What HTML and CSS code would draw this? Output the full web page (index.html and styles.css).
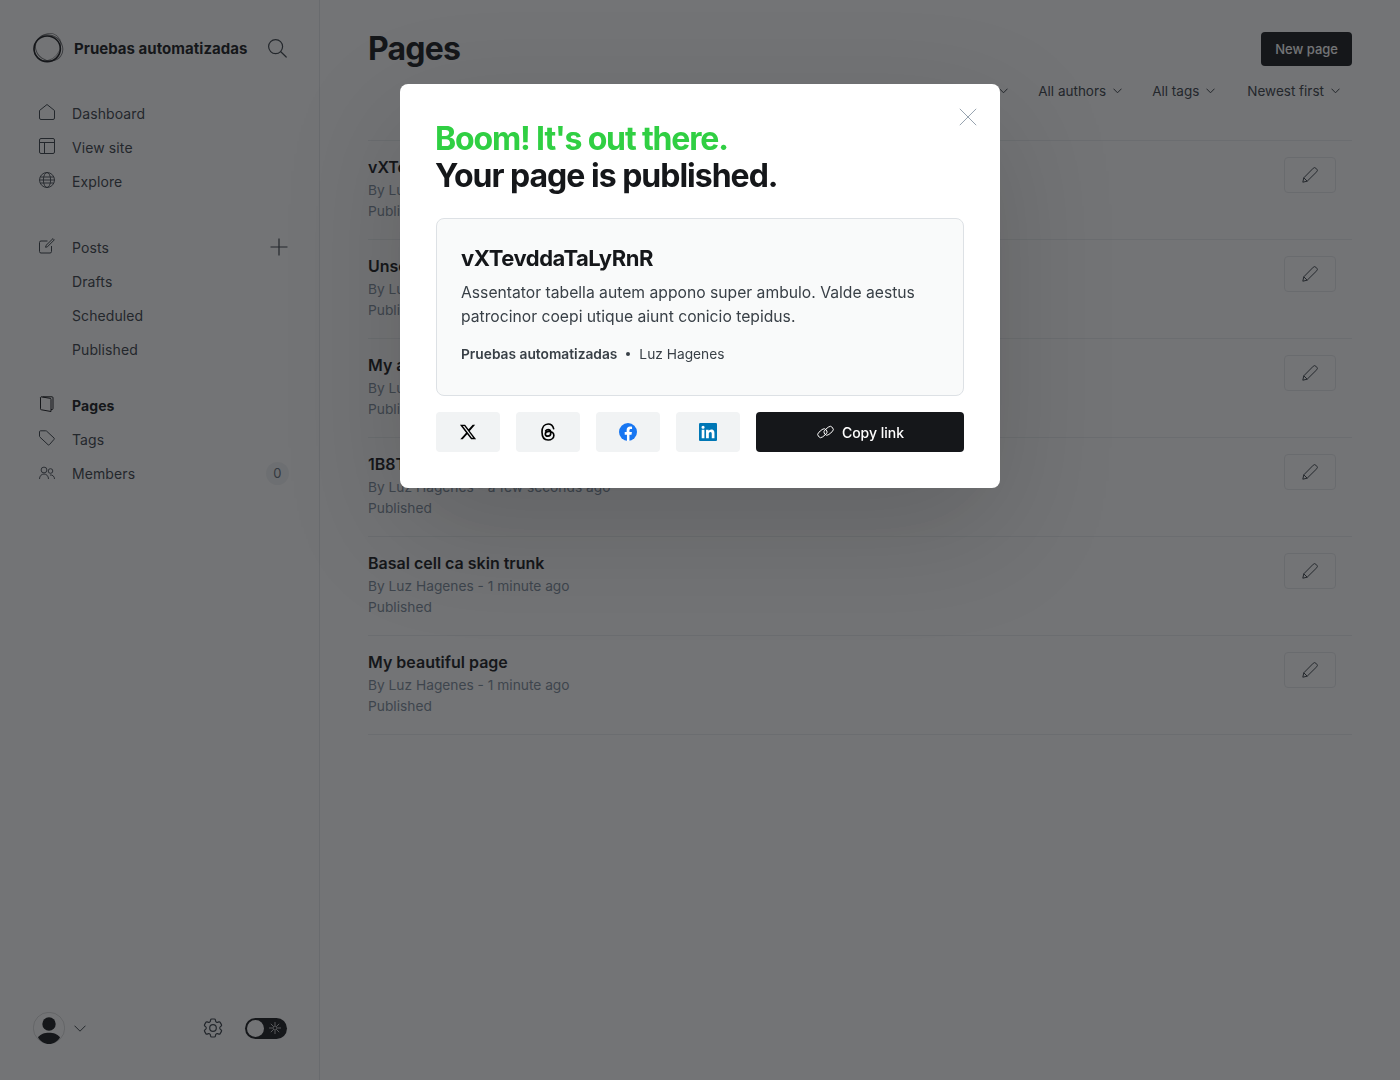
FILE: index.html
```html
<!DOCTYPE html>
<html lang="en">
  <head>
    <meta charset="UTF-8" />
    <meta name="viewport" content="width=device-width, initial-scale=1.0" />
    <title>Pages - Pruebas automatizadas</title>
    <link rel="stylesheet" href="styles.css">
  </head>
  <body>
    <div class="app">
      <aside class="sidebar">
        <div class="brand">
          <svg class="brand-logo" viewBox="0 0 32 32" fill="none" stroke="#15171a">
            <ellipse cx="15.2" cy="16.8" rx="13.2" ry="12.8" stroke-width="1.6" />
            <ellipse cx="16.8" cy="15.2" rx="14.2" ry="12.6" stroke-width="1" opacity="0.6" transform="rotate(35 16 16)" />
            <ellipse cx="16.4" cy="15" rx="14.8" ry="12.2" stroke-width="0.8" opacity="0.5" transform="rotate(-50 16 16)" />
          </svg>
          <span class="brand-name">Pruebas automatizadas</span>
          <svg class="search-icon" viewBox="0 0 20 20" fill="none" stroke="#394047" stroke-width="1.2" stroke-linecap="round">
            <circle cx="8.6" cy="8.6" r="7" />
            <path d="M13.8 13.8l5.4 5.2" />
          </svg>
        </div>

        <nav class="nav-group nav-group-top">
          <a class="nav-item">
            <svg class="nav-icon" viewBox="0 0 16 16" fill="none" stroke="#394047" stroke-linejoin="round">
              <path d="M.5 6.500L8 .5l7.500 6v7.500a1.500 1.500 0 0 1-1.500 1.500H2A1.500 1.500 0 0 1 .5 14z" />
            </svg>
            Dashboard
          </a>
          <a class="nav-item">
            <svg class="nav-icon" viewBox="0 0 16 16" fill="none" stroke="#394047">
              <rect x="0.5" y="0.5" width="15" height="15" rx="1.5" />
              <path d="M.5 4.500h15M5.500 4.500v11" />
            </svg>
            View site
          </a>
          <a class="nav-item">
            <svg class="nav-icon" viewBox="0 0 16 16" fill="none" stroke="#394047" stroke-width="0.9">
              <circle cx="8" cy="8" r="7.5" />
              <ellipse cx="8" cy="8" rx="3.6" ry="7.5" />
              <path d="M1.200 5h13.600M1.200 11h13.600M.5 8h15" />
            </svg>
            Explore
          </a>
        </nav>

        <nav class="nav-group">
          <a class="nav-item">
            <svg class="nav-icon" viewBox="0 0 16 16" fill="none" stroke="#394047" stroke-linejoin="round">
              <path d="M8.500 3H2A1.500 1.500 0 0 0 .5 4.500v9A1.500 1.500 0 0 0 2 15h9a1.500 1.500 0 0 0 1.500-1.500V8" />
              <path d="M7 7.400L14 .6l1.300 1.300-6.900 6.900-1.800.5z" />
            </svg>
            Posts
            <svg class="add-icon" viewBox="0 0 18 18" fill="none" stroke="#394047" stroke-width="1.2">
              <path d="M9 .5v17M.5 9h17" />
            </svg>
          </a>
          <a class="nav-item">Drafts</a>
          <a class="nav-item">Scheduled</a>
          <a class="nav-item">Published</a>
        </nav>

        <nav class="nav-group">
          <a class="nav-item nav-active">
            <svg class="nav-icon" viewBox="0 0 16 16" fill="none" stroke="#15171a" stroke-linejoin="round">
              <path d="M3.500 .8h9.500a1 1 0 0 1 1 1V12.500a1 1 0 0 1-1 1h-1" />
              <path d="M2 .8l9 1.500a1 1 0 0 1 1 1V15.500L2.500 13.800a1 1 0 0 1-1-1V1.300z" />
            </svg>
            Pages
          </a>
          <a class="nav-item">
            <svg class="nav-icon" viewBox="0 0 16 16" fill="none" stroke="#394047" stroke-linejoin="round">
              <path d="M.5 1.800A1 1 0 0 1 1.500.8h5.200a1.500 1.500 0 0 1 1 .400l7.300 6.800a1 1 0 0 1 0 1.400l-4.600 5.300a1 1 0 0 1-1.400 0L1 7.200a1.500 1.500 0 0 1-.5-1z" />
            </svg>
            Tags
          </a>
          <a class="nav-item">
            <svg class="nav-icon" viewBox="0 0 16 16" fill="none" stroke="#394047" stroke-width="0.9">
              <circle cx="5" cy="6" r="2.9" />
              <path d="M.5 15c0-3 2-5 4.500-5s4.500 2 4.500 5" />
              <circle cx="11.5" cy="7" r="2.3" />
              <path d="M11 11c2.500-.4 4.500 1.400 4.500 4" />
            </svg>
            Members
            <span class="count-badge">0</span>
          </a>
        </nav>

        <div class="sidebar-footer">
          <div class="user-menu">
            <svg class="avatar" viewBox="0 0 32 32">
              <circle cx="16" cy="16" r="15.7" fill="none" stroke="#15171a" stroke-width="0.4" opacity="0.4" />
              <circle cx="16" cy="12" r="6.7" fill="#15171a" />
              <path d="M5 25.500c2.500-3.600 6.500-4.700 11-4.700s8.500 1.100 11 4.700C24.500 29.500 20.500 32 16 32S7.500 29.500 5 25.500z" fill="#15171a" />
            </svg>
            <svg class="chevron-lg" viewBox="0 0 12 7" fill="none" stroke="#394047">
              <path d="M.5.700L6 6.200 11.500.700" />
            </svg>
          </div>
          <svg class="gear-icon" viewBox="0 0 24 24" fill="none" stroke="#394047" stroke-width="1.2" stroke-linejoin="round">
            <circle cx="12" cy="12" r="3.3" />
            <path d="M9.594 3.940c.09-.542.56-.94 1.110-.94h2.593c.55 0 1.020.398 1.110.94l.213 1.281c.063.374.313.686.645.870.074.040.147.083.220.127.324.196.720.257 1.075.124l1.217-.456a1.125 1.125 0 011.370.490l1.296 2.247a1.125 1.125 0 01-.260 1.431l-1.003.827c-.293.240-.438.613-.431.992a6.759 6.759 0 010 .255c-.007.378.138.750.430.990l1.005.828c.424.350.534.954.260 1.430l-1.298 2.247a1.125 1.125 0 01-1.369.491l-1.217-.456c-.355-.133-.750-.072-1.076.124a6.570 6.570 0 01-.220.128c-.331.183-.581.495-.644.869l-.213 1.280c-.09.543-.56.941-1.110.941h-2.594c-.55 0-1.020-.398-1.110-.940l-.213-1.281c-.062-.374-.312-.686-.644-.870a6.520 6.520 0 01-.220-.127c-.325-.196-.720-.257-1.076-.124l-1.217.456a1.125 1.125 0 01-1.369-.490l-1.297-2.247a1.125 1.125 0 01.260-1.431l1.004-.827c.292-.240.437-.613.430-.992a6.932 6.932 0 010-.255c.007-.378-.138-.750-.430-.990l-1.004-.828a1.125 1.125 0 01-.260-1.430l1.297-2.247a1.125 1.125 0 011.370-.491l1.216.456c.356.133.751.072 1.076-.124.072-.044.146-.087.220-.128.332-.183.582-.495.644-.869l.214-1.281z" />
          </svg>
          <div class="theme-toggle">
            <span class="toggle-knob"></span>
            <svg class="sun-icon" viewBox="0 0 12 12" fill="none" stroke="#fff" stroke-width="0.7">
              <circle cx="6" cy="6" r="2" />
              <path d="M6 0v3.500M6 8.500V12M0 6h3.500M8.500 6H12M1.800 1.800l2.400 2.400M7.800 7.800l2.400 2.400M10.200 1.800L7.800 4.200M4.200 7.800l-2.400 2.400" />
            </svg>
          </div>
        </div>
      </aside>

      <main class="content">
        <header class="page-header">
          <h1 class="page-title">Pages</h1>
          <button class="new-page-btn">New page</button>
        </header>

        <div class="filters">
          <span class="filter">All pages <svg class="chevron" viewBox="0 0 9 6" fill="none" stroke="#394047"><path d="M.5.700L4.500 4.800 8.500.700" /></svg></span>
          <span class="filter">All access <svg class="chevron" viewBox="0 0 9 6" fill="none" stroke="#394047"><path d="M.5.700L4.500 4.800 8.500.700" /></svg></span>
          <span class="filter">All authors <svg class="chevron" viewBox="0 0 9 6" fill="none" stroke="#394047"><path d="M.5.700L4.500 4.800 8.500.700" /></svg></span>
          <span class="filter">All tags <svg class="chevron" viewBox="0 0 9 6" fill="none" stroke="#394047"><path d="M.5.700L4.500 4.800 8.500.700" /></svg></span>
          <span class="filter filter-sort">Newest first <svg class="chevron" viewBox="0 0 9 6" fill="none" stroke="#394047"><path d="M.5.700L4.500 4.800 8.500.700" /></svg></span>
        </div>

        <ul class="page-list">
          <li class="page-row">
            <div class="page-info">
              <h3 class="page-name">vXTevddaTaLyRnR</h3>
              <p class="page-meta">By Luz Hagenes - a few seconds ago</p>
              <p class="page-meta">Published</p>
            </div>
            <button class="edit-btn"><svg viewBox="0 0 16 16" fill="none" stroke="#394047" stroke-linejoin="round"><path d="M.8 15.200l1-4.400L11.300 1.200a1.800 1.800 0 0 1 2.500 0l1 1a1.800 1.800 0 0 1 0 2.500L5.200 14.200zM1.800 10.800l3.400 3.400" /></svg></button>
          </li>
          <li class="page-row">
            <div class="page-info">
              <h3 class="page-name">Unsettled page</h3>
              <p class="page-meta">By Luz Hagenes - a few seconds ago</p>
              <p class="page-meta">Published</p>
            </div>
            <button class="edit-btn"><svg viewBox="0 0 16 16" fill="none" stroke="#394047" stroke-linejoin="round"><path d="M.8 15.200l1-4.400L11.300 1.200a1.800 1.800 0 0 1 2.500 0l1 1a1.800 1.800 0 0 1 0 2.500L5.200 14.200zM1.800 10.800l3.400 3.400" /></svg></button>
          </li>
          <li class="page-row">
            <div class="page-info">
              <h3 class="page-name">My awesome page</h3>
              <p class="page-meta">By Luz Hagenes - a few seconds ago</p>
              <p class="page-meta">Published</p>
            </div>
            <button class="edit-btn"><svg viewBox="0 0 16 16" fill="none" stroke="#394047" stroke-linejoin="round"><path d="M.8 15.200l1-4.400L11.300 1.200a1.800 1.800 0 0 1 2.500 0l1 1a1.800 1.800 0 0 1 0 2.500L5.200 14.200zM1.800 10.800l3.400 3.400" /></svg></button>
          </li>
          <li class="page-row">
            <div class="page-info">
              <h3 class="page-name">1B8TqkPz</h3>
              <p class="page-meta">By Luz Hagenes - a few seconds ago</p>
              <p class="page-meta">Published</p>
            </div>
            <button class="edit-btn"><svg viewBox="0 0 16 16" fill="none" stroke="#394047" stroke-linejoin="round"><path d="M.8 15.200l1-4.400L11.300 1.200a1.800 1.800 0 0 1 2.500 0l1 1a1.800 1.800 0 0 1 0 2.500L5.200 14.200zM1.800 10.800l3.400 3.400" /></svg></button>
          </li>
          <li class="page-row">
            <div class="page-info">
              <h3 class="page-name">Basal cell ca skin trunk</h3>
              <p class="page-meta">By Luz Hagenes - 1 minute ago</p>
              <p class="page-meta">Published</p>
            </div>
            <button class="edit-btn"><svg viewBox="0 0 16 16" fill="none" stroke="#394047" stroke-linejoin="round"><path d="M.8 15.200l1-4.400L11.300 1.200a1.800 1.800 0 0 1 2.500 0l1 1a1.800 1.800 0 0 1 0 2.500L5.200 14.200zM1.800 10.800l3.400 3.400" /></svg></button>
          </li>
          <li class="page-row">
            <div class="page-info">
              <h3 class="page-name">My beautiful page</h3>
              <p class="page-meta">By Luz Hagenes - 1 minute ago</p>
              <p class="page-meta">Published</p>
            </div>
            <button class="edit-btn"><svg viewBox="0 0 16 16" fill="none" stroke="#394047" stroke-linejoin="round"><path d="M.8 15.200l1-4.400L11.300 1.200a1.800 1.800 0 0 1 2.500 0l1 1a1.800 1.800 0 0 1 0 2.500L5.200 14.200zM1.800 10.800l3.400 3.400" /></svg></button>
          </li>
        </ul>
      </main>
    </div>

    <div class="backdrop"></div>

    <div class="modal">
      <svg class="modal-close" viewBox="0 0 18 18" fill="none" stroke="#7c8b9a" stroke-width="0.8">
        <path d="M.8.800l16.400 16.400M17.200.800L.8 17.200" />
      </svg>
      <h2 class="modal-title"><span class="modal-title-green">Boom! It's out there.</span><br />Your page is published.</h2>

      <div class="preview-card">
        <h3 class="preview-title">vXTevddaTaLyRnR</h3>
        <p class="preview-text">Assentator tabella autem appono super ambulo. Valde aestus patrocinor coepi utique aiunt conicio tepidus.</p>
        <div class="preview-meta">
          <strong>Pruebas automatizadas</strong>
          <span class="meta-dot"></span>
          <span>Luz Hagenes</span>
        </div>
      </div>

      <div class="share-row">
        <button class="share-btn">
          <svg class="share-icon" viewBox="0 0 24 24"><path fill="#000" d="M18.240 2.250h3.310l-7.230 8.260 8.500 11.240H16.170l-5.210-6.820-5.970 6.820H1.680l7.730-8.840L1.250 2.250H8.080l4.710 6.230zm-1.160 17.520h1.830L7.080 4.130H5.120z" /></svg>
        </button>
        <button class="share-btn">
          <svg class="share-icon" viewBox="0 0 24 24" fill="none" stroke="#000" stroke-width="2.2" stroke-linecap="round"><path d="M19.500 7.500C18.500 3.300 15.800 1.300 12.200 1.300 7 1.300 4 5.600 4 12s3 10.700 8.200 10.700c4.300 0 7.600-2.700 7.600-6 0-3.400-2.900-5.400-6.800-5.400-2.800 0-4.600 1.300-4.600 3.200 0 1.800 1.500 3 3.400 3 2.500 0 3.900-1.700 3.900-4.300 0-2.800-1.300-4.400-3.600-4.400-1.500 0-2.600.6-3.300 1.700" /></svg>
        </button>
        <button class="share-btn">
          <svg class="share-icon" viewBox="0 0 24 24"><circle cx="12" cy="12" r="12" fill="#1877f2" /><path fill="#fff" d="M16.700 15.500l.5-3.500h-3.300V9.800c0-1 .5-1.900 2-1.900h1.500v-3s-1.400-.2-2.700-.2c-2.700 0-4.500 1.700-4.500 4.600V12H7.600v3.500h3v8.400c.6.100 1.200.1 1.800.1s1.100 0 1.500-.1v-8.400z" /></svg>
        </button>
        <button class="share-btn">
          <svg class="share-icon" viewBox="0 0 24 24"><rect width="24" height="24" rx="1.5" fill="#0077b5" /><path fill="#fff" d="M3.600 9h3.600v11.400H3.600zM5.400 3.500a2.100 2.100 0 1 1 0 4.200 2.100 2.100 0 0 1 0-4.200zM9.400 9h3.400v1.600c.5-.9 1.700-1.900 3.500-1.900 3.700 0 4.300 2.400 4.300 5.600v6.100H17v-5.400c0-1.300 0-3-1.800-3s-2.100 1.400-2.100 2.900v5.500H9.400z" /></svg>
        </button>
        <button class="copy-btn">
          <svg class="link-icon" viewBox="0 0 18 16" fill="none" stroke="#fff" stroke-width="0.9">
            <rect x="0.8" y="6.200" width="10.200" height="6" rx="3" transform="rotate(-40 5.900 9.200)" />
            <rect x="7" y="3.800" width="10.200" height="6" rx="3" transform="rotate(-40 12.100 6.800)" />
          </svg>
          Copy link
        </button>
      </div>
    </div>
  </body>
</html>
```

FILE: styles.css
```css
* {
  box-sizing: border-box;
}

body {
  margin: 0;
  font-family: Inter, "Liberation Sans", sans-serif;
  color: #15171a;
  background-color: #fff;
}

h1,
h2,
h3,
p,
ul {
  margin: 0;
  padding: 0;
}

button {
  font-family: inherit;
  border: none;
  cursor: pointer;
}

.app {
  display: flex;
  height: 1080px;
  overflow: hidden;
}

/* Sidebar */
.sidebar {
  width: 320px;
  flex-shrink: 0;
  height: 100%;
  display: flex;
  flex-direction: column;
  padding: 32px 30px 36px 33px;
  border-right: 1px solid #e6e9eb;
}

.brand {
  display: flex;
  align-items: center;
  height: 32px;
  margin-bottom: 32px;
}

.brand-logo {
  width: 32px;
  height: 32px;
  margin-left: -1px;
  margin-right: 10px;
}

.brand-name {
  font-size: 15px;
  font-weight: 700;
  letter-spacing: 0.03px;
  white-space: nowrap;
}

.search-icon {
  width: 20px;
  height: 20px;
  margin-left: 19.5px;
}

.nav-group {
  display: flex;
  flex-direction: column;
  margin-bottom: 22px;
}

.nav-group-top {
  margin-bottom: 32px;
}

.nav-group:last-of-type {
  margin-bottom: 0;
}

.nav-item {
  display: flex;
  align-items: center;
  height: 34px;
  padding-left: 39px;
  font-size: 14px;
  letter-spacing: 0.1px;
  color: #394047;
  position: relative;
}

.nav-active {
  font-weight: 700;
  color: #15171a;
}

.nav-icon {
  position: absolute;
  left: 6px;
  top: 8px;
  width: 16px;
  height: 16px;
}

.add-icon {
  width: 18px;
  height: 18px;
  margin-left: auto;
  margin-right: 1px;
}

.count-badge {
  display: flex;
  align-items: center;
  justify-content: center;
  width: 23px;
  height: 23px;
  margin-left: auto;
  border-radius: 50%;
  background-color: #f1f3f4;
  color: #626d79;
  font-size: 13px;
}

.sidebar-footer {
  display: flex;
  align-items: center;
  margin-top: auto;
}

.user-menu {
  display: flex;
  align-items: center;
  gap: 9px;
}

.avatar {
  width: 32px;
  height: 32px;
}

.chevron-lg {
  width: 12px;
  height: 7px;
}

.gear-icon {
  width: 24px;
  height: 24px;
  margin-left: 115px;
}

.theme-toggle {
  display: flex;
  align-items: center;
  justify-content: space-between;
  width: 42px;
  height: 21px;
  margin-left: 20px;
  padding: 0 6px 0 2px;
  border-radius: 11px;
  background-color: #15171a;
}

.toggle-knob {
  width: 17px;
  height: 17px;
  border-radius: 50%;
  background-color: #fff;
}

.sun-icon {
  width: 12px;
  height: 12px;
}

/* Main column */
.content {
  flex: 1;
  padding: 32px 48px 0;
}

.page-header {
  display: flex;
  align-items: center;
  justify-content: space-between;
  height: 34px;
}

.page-title {
  font-size: 32px;
  font-weight: 700;
  letter-spacing: -0.8px;
  margin-bottom: 2px;
}

.new-page-btn {
  height: 34px;
  padding: 0 14px;
  border-radius: 4px;
  background-color: #15171a;
  color: #fff;
  font-size: 13px;
  font-weight: 500;
}

.filters {
  display: flex;
  justify-content: flex-end;
  gap: 30px;
  height: 74px;
  padding: 16px 12px 0 0;
}

.filter {
  display: flex;
  align-items: center;
  gap: 7px;
  height: 18px;
  font-size: 13.5px;
  font-weight: 400;
  color: #394047;
}

.filter-sort {
  margin-left: 2px;
}

.chevron {
  width: 9px;
  height: 6px;
}

.page-list {
  list-style: none;
  border-top: 1px solid #ebeef0;
}

.page-row {
  display: flex;
  justify-content: space-between;
  height: 99px;
  padding: 16px 16px 0 0;
  border-bottom: 1px solid #ebeef0;
}

.page-info {
  padding-top: 1px;
}

.page-name {
  font-size: 16px;
  line-height: 19px;
  font-weight: 600;
  margin-bottom: 3px;
}

.page-meta {
  font-size: 13.75px;
  line-height: 21px;
  color: #7c8b9a;
}

.edit-btn {
  display: flex;
  align-items: center;
  justify-content: center;
  width: 52px;
  height: 36px;
  border: 1px solid #e6e9eb;
  border-radius: 4px;
  background-color: #fff;
}

.edit-btn svg {
  width: 16px;
  height: 16px;
}

/* Publish modal */
.backdrop {
  position: fixed;
  inset: 0;
  background-color: rgba(21, 23, 26, 0.6);
}

.modal {
  position: fixed;
  left: 400px;
  top: 84px;
  width: 600px;
  height: 404px;
  padding: 36px;
  border-radius: 8px;
  background-color: #fff;
  box-shadow: 0 40px 120px rgba(0, 0, 0, 0.16);
}

.modal-close {
  position: absolute;
  top: 24px;
  right: 23px;
  width: 18px;
  height: 18px;
}

.modal-title {
  font-size: 32px;
  line-height: 37px;
  font-weight: 700;
  letter-spacing: -1px;
  margin-left: -1px;
  margin-bottom: 24px;
}

.modal-title-green {
  color: #30cf43;
  letter-spacing: -1.15px;
}

.preview-card {
  height: 178px;
  padding: 24px;
  border: 1px solid #dde1e5;
  border-radius: 8px;
  background-color: #f9fafa;
  margin-bottom: 16px;
}

.preview-title {
  font-size: 22px;
  line-height: 30px;
  font-weight: 700;
  letter-spacing: -0.45px;
  margin-bottom: 8px;
}

.preview-text {
  font-size: 15.7px;
  line-height: 24px;
  color: #394047;
  margin-bottom: 15px;
}

.preview-meta {
  display: flex;
  align-items: center;
  font-size: 13.75px;
  line-height: 20px;
  color: #394047;
}

.preview-meta strong {
  font-weight: 600;
}

.meta-dot {
  width: 4px;
  height: 4px;
  margin: 0 9px;
  border-radius: 50%;
  background-color: #394047;
}

.share-row {
  display: flex;
  gap: 16px;
}

.share-btn {
  display: flex;
  align-items: center;
  justify-content: center;
  width: 64px;
  height: 40px;
  border-radius: 4px;
  background-color: #f1f3f4;
}

.share-icon {
  width: 18px;
  height: 18px;
}

.copy-btn {
  flex: 1;
  display: flex;
  align-items: center;
  justify-content: center;
  gap: 7px;
  height: 40px;
  border-radius: 4px;
  background-color: #15171a;
  color: #fff;
  font-size: 14px;
  font-weight: 500;
}

.link-icon {
  width: 19px;
  height: 16px;
}
```
